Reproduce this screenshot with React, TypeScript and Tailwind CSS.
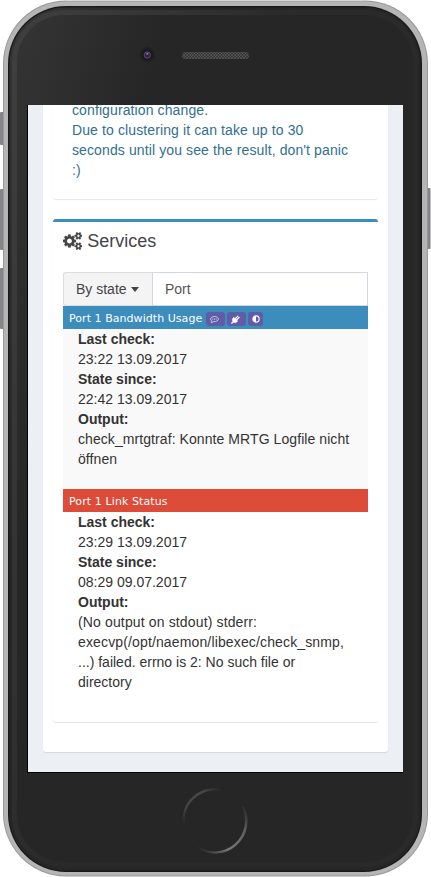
import React from "react";

const shadow = "shadow-[0_1px_1px_rgba(0,0,0,0.1)]";

function CogsIcon() {
  return (
    <svg width="19.300" height="18" viewBox="0 0 1920 1792" fill="currentColor" stroke="currentColor" strokeWidth="24" className="mt-[1px]">
      <path d="M896 896q0-106-75-181t-181-75-181 75-75 181 75 181 181 75 181-75 75-181zm768 512q0-52-38-90t-90-38-90 38-38 90q0 53 37.500 90.500t90.500 37.500 90.500-37.500 37.500-90.500zm0-1024q0-52-38-90t-90-38-90 38-38 90q0 53 37.500 90.500t90.500 37.500 90.500-37.500 37.500-90.500zm-384 421v185q0 10-7 19.500t-16 10.500l-155 24q-11 35-32 76 34 48 90 115 7 11 7 20 0 12-7 19-23 30-82.500 89.500t-78.500 59.500q-11 0-21-7l-115-90q-37 19-77 31-11 108-23 155-7 24-30 24h-186q-11 0-20-7.500t-10-17.500l-23-153q-34-10-75-31l-118 89q-7 7-20 7-11 0-21-8-144-133-144-160 0-9 7-19 10-14 41-53t47-61q-23-44-35-82l-152-24q-10-1-17-9.500t-7-19.500v-185q0-10 7-19.500t16-10.500l155-24q11-35 32-76-34-48-90-115-7-11-7-20 0-12 7-20 22-30 82-89t79-59q11 0 21 7l115 90q34-18 77-32 11-108 23-154 7-24 30-24h186q11 0 20 7.500t10 17.500l23 153q34 10 75 31l118-89q8-7 20-7 11 0 21 8 144 133 144 160 0 8-7 19-12 16-42 54t-45 60q23 48 34 82l152 23q10 2 17 10.500t7 19.500zm640 533v140q0 16-149 31-12 27-30 52 51 113 51 138 0 4-4 7-122 71-124 71-8 0-46-47t-52-68q-20 2-30 2t-30-2q-14 21-52 68t-46 47q-2 0-124-71-4-3-4-7 0-25 51-138-18-25-30-52-149-15-149-31v-140q0-16 149-31 13-29 30-52-51-113-51-138 0-4 4-7 4-2 35-20t59-34 30-16q8 0 46 46.500t52 67.500q20-2 30-2t30 2q51-71 92-112l6-2q4 0 124 70 4 3 4 7 0 25-51 138 17 23 30 52 149 15 149 31zm0-1024v140q0 16-149 31-12 27-30 52 51 113 51 138 0 4-4 7-122 71-124 71-8 0-46-47t-52-68q-20 2-30 2t-30-2q-14 21-52 68t-46 47q-2 0-124-71-4-3-4-7 0-25 51-138-18-25-30-52-149-15-149-31v-140q0-16 149-31 13-29 30-52-51-113-51-138 0-4 4-7 4-2 35-20t59-34 30-16q8 0 46 46.500t52 67.500q20-2 30-2t30 2q51-71 92-112l6-2q4 0 124 70 4 3 4 7 0 25-51 138 17 23 30 52 149 15 149 31z" />
    </svg>
  );
}

function Chip({ children, wide }: { children: React.ReactNode; wide?: boolean }) {
  return (
    <span className={"flex h-[14px] items-center justify-center rounded-[3px] bg-[#605ca8] text-white " + (wide ? "w-[19px]" : "w-[15px]")}>
      {children}
    </span>
  );
}

function CommentIcon() {
  return (
    <svg width="9" height="9" viewBox="0 0 18 18" fill="none" stroke="#e3e2f1" strokeWidth="1.500" className="mr-[3px]">
      <path d="M9 3C4.600 3 1.200 5.200 1.200 8.200c0 1.800 1 3.200 2.800 4.100-.2 1.200-.8 2.100-1.600 2.900 1.900-.2 3.300-1 4.500-2 5.300.5 9.900-1.600 9.900-5C16.800 5.200 13.400 3 9 3z" />
      <path d="M4.800 8.200h1.800M8.100 8.200h1.800M11.400 8.200h1.800" strokeWidth="2" />
    </svg>
  );
}

function PlugIcon() {
  return (
    <svg width="9" height="9" viewBox="0 0 18 18" className="mr-[3px]">
      <path d="M5.500 4.500l8 8c-2.800 3-6 3.500-8.700 2L1.800 17.500.5 16.200l3-3C2 10.500 2.500 7.500 5.500 4.500z" fill="#fff" stroke="#fff" />
      <path d="M9 7l4.700-4.700M11.500 9.500l4.700-4.700" stroke="#fff" strokeWidth="2.600" strokeLinecap="round" />
    </svg>
  );
}

function ContrastIcon() {
  return (
    <svg width="8" height="8" viewBox="0 0 16 16">
      <circle cx="8" cy="8" r="6.300" fill="none" stroke="#fff" strokeWidth="2.200" />
      <path d="M8 2a6 6 0 0 0 0 12z" fill="#fff" />
    </svg>
  );
}

function Service({ title, color, bg, check, since, output, chips }: {
  title: React.ReactNode; color: string; bg: string; check: string; since: string; output: React.ReactNode; chips?: boolean;
}) {
  return (
    <section className={bg}>
      <div className={"flex h-[23px] items-center gap-1 px-1.5 font-['DejaVu_Sans',sans-serif] text-[11px] text-white " + color}>
        <span className="mt-[2px] whitespace-nowrap">{title}</span>
        {chips && (
          <div className="mt-[3px] flex gap-[2px]">
            <Chip wide><CommentIcon /></Chip>
            <Chip wide><PlugIcon /></Chip>
            <Chip><ContrastIcon /></Chip>
          </div>
        )}
      </div>
      <div className="px-[15px] pb-5 whitespace-nowrap">
        <b className="block">Last check:</b>
        <p>{check}</p>
        <b className="block">State since:</b>
        <p>{since}</p>
        <b className="block">Output:</b>
        <p>{output}</p>
      </div>
    </section>
  );
}

function Screen() {
  return (
    <main className="h-[668px] w-[376px] overflow-hidden border-b border-l border-black bg-[#ecf0f5] px-[15px] font-['Liberation_Sans',Arial,sans-serif] text-[14px] leading-5 text-[#333]">
      <div className={"h-[647px] rounded-b-[3px] bg-white px-2.5 " + shadow}>
        <section className={"h-[94px] overflow-hidden rounded-b-[3px] " + shadow}>
          <p className="-mt-[5px] pl-[19px] tracking-[0.11px] whitespace-nowrap text-[#31708f]">
            configuration change.<br />
            Due to clustering it can take up to 30<br />
            seconds until you see the result, don't panic<br />
            :)
          </p>
        </section>
        <section className={"mt-5 h-[503px] rounded-[3px] border-t-[3px] border-[#3c8dbc] px-2.5 " + shadow}>
          <h3 className="flex h-[50px] items-start gap-[5px] pt-[9px] text-[18px] text-[#444]">
            <CogsIcon />
            <span>Services</span>
          </h3>
          <div className="flex h-[34px]">
            <button className="flex w-[89px] items-center rounded-l-[3px] border border-r-0 border-[#ddd] bg-[#f4f4f4] pl-3 text-[#444]">
              By state
              <span className="ml-[4px] border-x-[4.500px] border-t-[5px] border-x-transparent border-t-[#444]" />
            </button>
            <div className="flex flex-1 items-center border border-[#d2d6de] px-3 text-[#555]">Port</div>
          </div>
          <Service
            title={<span className="tracking-[0.05px]">Port 1 Bandwidth Usage</span>}
            color="bg-[#3c8dbc]" bg="bg-[#f9f9f9]" chips
            check="23:22 13.09.2017" since="22:42 13.09.2017"
            output={<span className="tracking-[0.075px]">check_mrtgtraf: Konnte MRTG Logfile nicht<br />öffnen</span>}
          />
          <Service
            title={<span className="tracking-[0.1px]">Port 1 Link Status</span>}
            color="bg-[#dd4b39]" bg="bg-white"
            check="23:29 13.09.2017" since="08:29 09.07.2017"
            output={
              <>
                <span className="tracking-[0.14px]">(No output on stdout) stderr:<br />execvp(/opt/naemon/libexec/check_snmp,</span><br />
                ...) failed. errno is 2: No such file or<br />directory
              </>
            }
          />
        </section>
      </div>
    </main>
  );
}

function DeviceArt() {
  return (
    <svg className="absolute inset-0" width="431" height="877" viewBox="0 0 431 877">
      <defs>
        <linearGradient id="glass" gradientUnits="userSpaceOnUse" x1="10" y1="20" x2="155" y2="60">
          <stop offset="0" stopColor="#353535" />
          <stop offset="1" stopColor="#262626" />
        </linearGradient>
        <linearGradient id="rim" gradientUnits="userSpaceOnUse" x1="10" y1="0" x2="280" y2="80">
          <stop offset="0" stopColor="#404040" />
          <stop offset="1" stopColor="#2a2a2a" />
        </linearGradient>
        <linearGradient id="homeA" gradientUnits="userSpaceOnUse" x1="183" y1="824" x2="223" y2="792">
          <stop offset="0" stopColor="#262626" />
          <stop offset="0.250" stopColor="#444" />
          <stop offset="0.700" stopColor="#484848" />
          <stop offset="1" stopColor="#262626" />
        </linearGradient>
        <linearGradient id="homeB" gradientUnits="userSpaceOnUse" x1="197" y1="847" x2="245" y2="806">
          <stop offset="0" stopColor="#262626" />
          <stop offset="0.350" stopColor="#777" />
          <stop offset="0.750" stopColor="#606060" />
          <stop offset="1" stopColor="#262626" />
        </linearGradient>
        <pattern id="mesh" width="3" height="3" patternUnits="userSpaceOnUse">
          <rect width="3" height="3" fill="#343434" />
          <circle cx="1" cy="1" r="0.800" fill="#686868" />
          <circle cx="2.500" cy="2.500" r="0.700" fill="#5c5c5c" />
        </pattern>
      </defs>
      <g fill="#858589">
        <rect x="0" y="112" width="4" height="33" rx="1" />
        <rect x="0" y="189" width="4" height="61" rx="1" />
        <rect x="0" y="268" width="4" height="61" rx="1" />
        <rect x="426" y="188" width="4.500" height="61" rx="1" />
      </g>
      <rect x="3" y="0.500" width="425" height="876" rx="63" fill="#999" />
      <rect x="4" y="1.500" width="423" height="874" rx="62" fill="#b4b5b4" />
      <path d="M67 .5h296" stroke="#d4d8d5" />
      <rect x="8" y="6" width="414" height="866" rx="58" fill="#181a19" />
      <rect x="9.500" y="7.500" width="411" height="863" rx="56" fill="url(#glass)" />
      <rect x="14.500" y="12.500" width="401" height="852" rx="50" fill="none" stroke="url(#rim)" strokeWidth="5" />
      <circle cx="147.300" cy="54.500" r="7.500" fill="#202020" />
      <circle cx="147.300" cy="54.500" r="5.500" fill="#191919" />
      <circle cx="147.300" cy="55" r="3.200" fill="#302444" stroke="#574775" />
      <circle cx="147.300" cy="53.700" r="1" fill="#8d86a0" />
      <rect x="182" y="52" width="67" height="7" rx="3.500" fill="url(#mesh)" />
      <path d="M183.500 824.600A31.700 31.700 0 0 1 223 790.300" fill="none" stroke="url(#homeA)" strokeWidth="2.500" />
      <path d="M197.300 847.300A31.700 31.700 0 0 0 242.900 806.400" fill="none" stroke="url(#homeB)" strokeWidth="2.500" />
    </svg>
  );
}

export default function App() {
  return (
    <div className="relative h-[877px] w-[431px] overflow-hidden bg-white">
      <DeviceArt />
      <div className="relative pl-[27px] pt-[105px]">
        <Screen />
      </div>
    </div>
  );
}
